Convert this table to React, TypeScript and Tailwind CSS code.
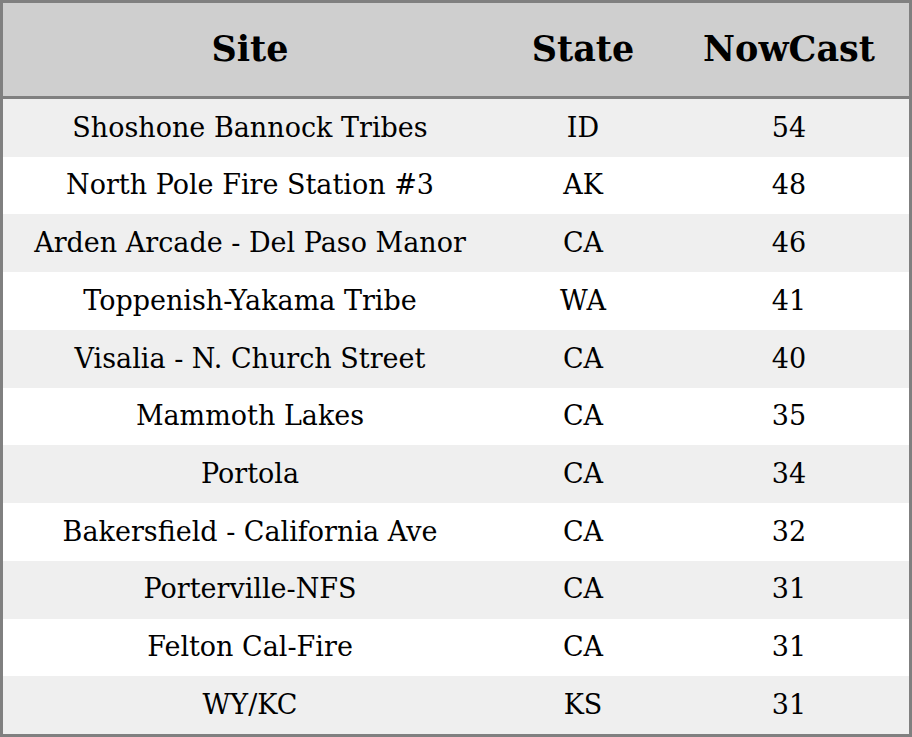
import React from "react";

const rows: [string, string, string][] = [
  ["Shoshone Bannock Tribes", "ID", "54"],
  ["North Pole Fire Station #3", "AK", "48"],
  ["Arden Arcade - Del Paso Manor", "CA", "46"],
  ["Toppenish-Yakama Tribe", "WA", "41"],
  ["Visalia - N. Church Street", "CA", "40"],
  ["Mammoth Lakes", "CA", "35"],
  ["Portola", "CA", "34"],
  ["Bakersfield - California Ave", "CA", "32"],
  ["Porterville-NFS", "CA", "31"],
  ["Felton Cal-Fire", "CA", "31"],
  ["WY/KC", "KS", "31"],
];

export default function App() {
  return (
    <div
      className="w-[912px] h-[737px] border-[3px] border-[#808080] flex flex-col text-black"
      style={{ fontFamily: '"DejaVu Serif", serif' }}
    >
      <div className="h-[93px] shrink-0 bg-[#cfcfcf] border-b-[3px] border-[#808080] box-content grid grid-cols-[494px_172px_1fr] items-center text-[35px] font-bold">
        <div className="text-center">Site</div>
        <div className="text-center">State</div>
        <div className="text-center">NowCast</div>
      </div>
      <div className="flex-1 flex flex-col">
        {rows.map((r, i) => (
          <div
            key={i}
            className={`flex-1 grid grid-cols-[494px_172px_1fr] items-center text-[27px] ${
              i % 2 === 0 ? "bg-[#efefef]" : "bg-white"
            }`}
          >
            <div className="text-center">{r[0]}</div>
            <div className="text-center">{r[1]}</div>
            <div className="text-center">{r[2]}</div>
          </div>
        ))}
      </div>
    </div>
  );
}
